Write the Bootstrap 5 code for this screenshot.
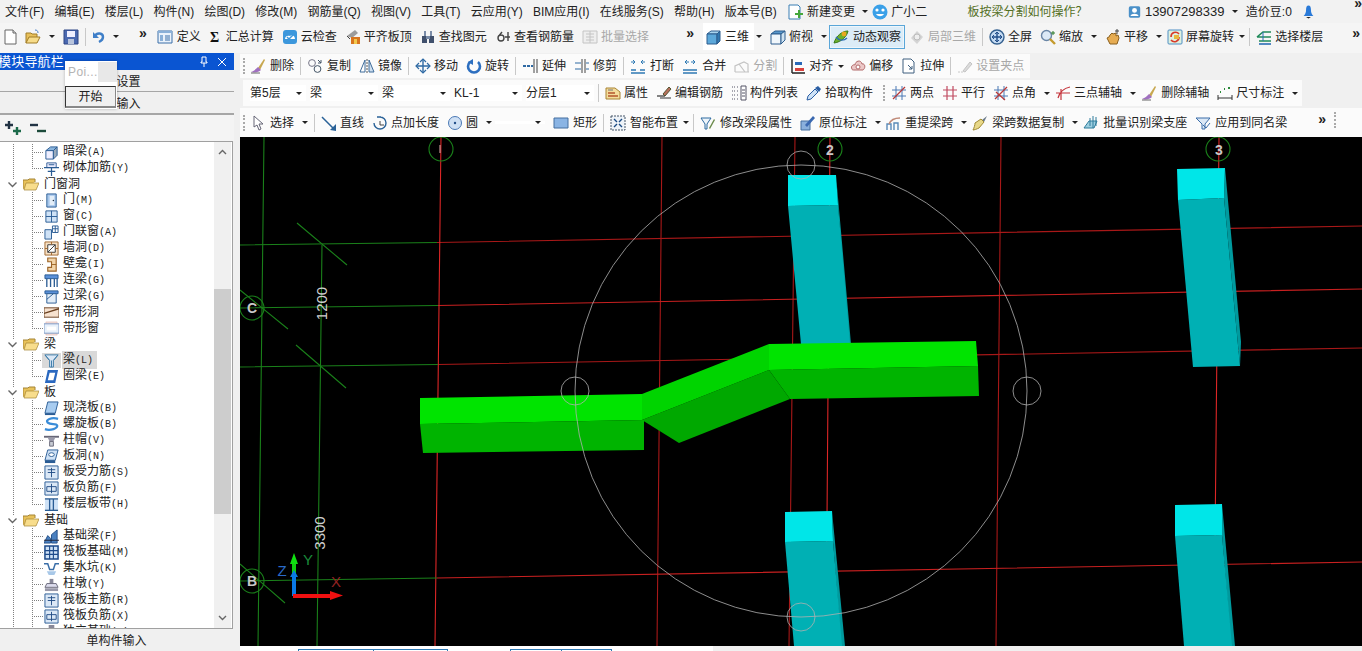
<!DOCTYPE html>
<html lang="zh-CN">
<head>
<meta charset="UTF-8">
<title>GCL</title>
<link href="https://cdn.jsdelivr.net/npm/bootstrap@5.3.0/dist/css/bootstrap.min.css" rel="stylesheet">
<script src="https://cdn.jsdelivr.net/npm/bootstrap@5.3.0/dist/js/bootstrap.bundle.min.js"></script>
<style>
html,body{height:100%}
body{width:1362px;height:651px;overflow:hidden;background:#f0f0f0;color:#222;font:12px/16px "Liberation Sans","Noto Sans CJK SC",sans-serif;white-space:nowrap;position:relative}
.ico{width:16px;height:16px;flex:none;display:block}
.ico-n{width:13px}
.ico-w{width:18px}
.tb-item{display:flex;align-items:center;gap:3px}
.tb-wide{gap:4px}
.tb-tight{gap:2px}
.tb-off{color:#a8a8a8}
.tb-sep{width:1px;height:18px;background:#c8c8c8;margin:0 -2px;flex:none}
.tb-sep-l{margin-left:-4px}
.tb-dd{width:0;height:0;border:3px solid transparent;border-top:3px solid #222;border-bottom:0;flex:none}
.tb-dd-t{margin:0 -2px 0 -3px}
.tb-dd-c{margin-right:-3px}
.tb-dd-n{margin-left:-6px}
.tb-dd-m{margin:0 -7px 0 -3px}
.tb-more{font:bold 14px/10px "Liberation Sans",sans-serif;color:#222;margin:-8px 2px 0 0;flex:none}
.tb-more-top{margin:-17px 0 0 29px}
.tb-more-gap{margin-left:12px}
.tb-grip{width:0;height:16px;border-left:2px dotted #aaa;flex:none}
.grip-l{margin-right:-3px}
.grip-m{margin:0 -2px 0 2px}

.menu-strip{height:23px;padding-left:5px;gap:10.2px;background:#f2f2f2}
.tool-strip{height:30px;background:#f5f5f5;padding:0 0 3px 4px;gap:8px}
.tool-left{width:692px;gap:8px;height:27px;flex:none}
.tool-white{background:#fff;height:27px;padding:0 5px 0 3px;margin-left:-1px}
.tool-active{border:1px solid #5aa6d8;background:#dcecf7;height:24px;padding:0 3px;gap:4px;margin:0 -4px 0 -6px;box-shadow:inset 0 0 0 1px #eef6fb}
.hint-q{color:#54701f;font-size:12px;margin-left:30px}
.phone-no{font-size:13px}

.side-pane{width:234px;flex:none;background:#f0f0f0;height:598px}
.pane-head{height:17px;background:#0a55d2;color:#fff;font-size:13px;line-height:16px;padding-right:3px;overflow:hidden}
.pane-title{margin-left:-2px;letter-spacing:.2px}
.pane-tab{height:22px;border-bottom:1px solid #a6a6a6;line-height:24px;text-align:center;padding-right:1px}
.pane-tab-b{height:23px;border-bottom:2px solid #a6a6a6}
.pane-tools{height:26px;gap:7px;padding-left:4px;background:#f4f4f4}
.tree-box{height:488px;background:#fff;border:1px solid #a0a0a0;border-left:0;width:233px;overflow:hidden}
.tree-rows{width:214px;padding:2px 0 0;margin:0;list-style:none;overflow:hidden;flex:none}
.tree-rows li{height:16px;display:flex;align-items:center;--dot:repeating-linear-gradient(#808080 0 1px,transparent 1px 2px);--dotx:repeating-linear-gradient(90deg,#808080 0 1px,transparent 1px 2px);background:var(--dot) 13px 0/1px 100% no-repeat}
.tree-leaf{padding-left:44px;gap:4px;background:var(--dot) 13px 0/1px 100% no-repeat,var(--dot) 32px 0/1px 100% no-repeat,var(--dotx) 32px 8px/12px 1px no-repeat!important}
.tree-end{background:var(--dot) 13px 0/1px 100% no-repeat,var(--dot) 32px 0/1px 8px no-repeat,var(--dotx) 32px 8px/12px 1px no-repeat!important}
.tree-leaf .ico{width:15px;height:15px}
.tree-sel{background:#d9d9d9;margin-left:-1px;padding:0 4px 0 1px}
.tree-leaf:has(.tree-sel) .ico{background:#d9d9d9;box-shadow:-2px 0 0 #d9d9d9,2px 0 0 #d9d9d9}
.tree-key{font:10px/16px "Liberation Mono",monospace}
.tree-fold{padding-left:7px;gap:5px}
.tree-fold .fold-chev{width:11px;height:11px;background:#fff;flex:none}
.scroll-rail{width:17px;background:#f0f0f0;flex:none;margin-left:auto;margin-right:1px}
.scroll-btn{height:20px;flex:none}
.scroll-gap{height:127px;flex:none}
.scroll-thumb{height:225px;background:#cdcdcd;flex:none}
.pane-foot{height:21px;line-height:23px;text-align:center;background:#f0f0f0;margin-top:1px;padding-right:1px}

.main-pane{width:1122px;flex:none;margin-left:6px;padding-top:1px}
.strip{background:#fbfbfb;gap:8px;flex:none}
.strip-a{height:24px;width:790px;padding-left:3px;margin-bottom:2px}
.strip-b{height:26px;width:1059px;margin-left:3px;padding-left:7px;margin-bottom:2px}
.strip-c{height:29px;width:1090px;padding-left:3px}
.strip-wrap{background:#fbfbfb}
.combo-wrap{gap:4px}
.combo-cell{width:68px;display:flex;align-items:center;justify-content:space-between;padding:0 4px 0 0;background:#fff}
.combo-first{width:56px}
.combo-blank{width:50px;margin-left:-5px}
.cad-view{width:1122px;height:509px;display:block;background:#000}
.foot-bar{height:5px;overflow:hidden}
.foot-white{width:473px;background:#fff;flex:none;padding-left:58px;gap:62px}
.foot-tab{border:1px solid #2b78b4;border-bottom:0;margin-top:3px;height:3px;display:flex}
.foot-tab span{border-right:1px solid #2b78b4}
.foot-t1{width:150px}.foot-t1 span{width:75px}
.foot-t2{width:102px}.foot-t2 span{width:51px}

.pop-start{position:absolute;left:65px;top:61px;width:52px;height:48px;background:#fff;box-shadow:0 0 3px rgba(0,0,0,.25)}
.pop-title{height:21px;color:#b4b4b4;font-size:12px;padding-left:3px;letter-spacing:.4px}
.pop-fade{width:20px;height:20px;background:#e8e8e8}
.pop-btn{display:block;width:51px;height:22px;margin:4px 0 0 0;padding:0;border:1px solid #333;border-right-color:#888;border-bottom:2px solid #888;border-radius:0;background:#f0f0f0;color:#222;font-size:12px;line-height:20px}
.cad-num{font:15px "Liberation Sans",sans-serif;fill:#d0d0d0;text-anchor:middle}
.cad-axis{font:14px "Liberation Sans",sans-serif;fill:#c8c8c8;font-weight:bold;text-anchor:middle}
.cad-tri{font:15px "Liberation Sans",sans-serif;text-anchor:middle}
</style>
</head>
<body class="d-flex flex-column">

<svg width="0" height="0" class="position-absolute">
<defs>
<symbol id="i-new" viewBox="0 0 13 16"><path d="M1 1h8l3 3v11H1z" fill="#fff" stroke="#666"/><path d="M9 1v3h3" fill="#ddd" stroke="#666"/></symbol>
<symbol id="i-open" viewBox="0 0 16 16"><path d="M1 14V4h5l1 1h5v3" fill="#e8c05a" stroke="#a07c28"/><path d="M1 14l3-6h11l-3 6z" fill="#f7dc8a" stroke="#a07c28"/><path d="M10 1c2 0 3 1 3 3" stroke="#4a80c8" fill="none"/></symbol>
<symbol id="i-save" viewBox="0 0 16 16"><path d="M1 1h14v14H1z" fill="#4a68b0" stroke="#2c4484"/><path d="M4 2h8v6H4z" fill="#eef"/><path d="M5 10h6v5H5z" fill="#b8c4dc"/></symbol>
<symbol id="i-undo" viewBox="0 0 13 16"><path d="M3 7c2-4 8-3 8 1 0 3-2 4-4 5" fill="none" stroke="#3f7fc8" stroke-width="2.4"/><path d="M1 3v6h6z" fill="#3f7fc8"/></symbol>
<symbol id="i-def" viewBox="0 0 16 16"><path d="M1 2h14v12H1z" fill="#eaf2fb" stroke="#3b6ea8"/><path d="M1 2h14v2H1zM3 6h3v6H3z" fill="#8ab0d8"/><path d="M8 7h5M8 9h5M8 11h5" stroke="#3b6ea8"/></symbol>
<symbol id="i-sum" viewBox="0 0 13 16"><text x="1" y="13" font-family="Liberation Serif" font-weight="bold" font-size="14" fill="#111">Σ</text></symbol>
<symbol id="i-cloud" viewBox="0 0 16 16"><rect x="1" y="1" width="14" height="14" rx="3" fill="#3c97dc"/><path d="M3 10c0-3 3-4 5-3 2-2 5 0 5 3z" fill="#fff"/><path d="M5 8l2 2 4-4" stroke="#3c97dc" fill="none" stroke-width="1.5"/></symbol>
<symbol id="i-flat" viewBox="0 0 16 16"><path d="M2 7l8-6 3 3-6 5z" fill="#9c9c9c"/><path d="M6 8h9v7H6z" fill="#d8751e"/><path d="M9 10h3v5H9z" fill="#f2c94c"/><path d="M2 7l3 3" stroke="#444"/></symbol>
<symbol id="i-find" viewBox="0 0 16 16"><path d="M2 7h5v7H2zM9 7h5v7H9z" fill="#40506c"/><path d="M4 2h2v5H4zM10 2h2v5h-2zM6 7h4v3H6z" fill="#7a8ca8"/></symbol>
<symbol id="i-rebar" viewBox="0 0 16 16"><path d="M6 6a3 3 0 1 0 0 6 3 3 0 0 0 0-6zM7 3L3 8" fill="none" stroke="#444" stroke-width="1.4"/><path d="M13 3v9M10 8h5" stroke="#444" stroke-width="1.4"/></symbol>
<symbol id="i-batch" viewBox="0 0 16 16"><path d="M1 2h14v12H1z" fill="#eee" stroke="#c4c4c4"/><path d="M4 5h8M4 8h8M4 11h8M8 2v12" stroke="#c4c4c4"/></symbol>
<symbol id="i-cube" viewBox="0 0 16 16"><path d="M1 5l4-3h9l-3 3z" fill="#a8d4ee" stroke="#2c5d8e"/><path d="M1 5h10v10H1z" fill="#5ca8da" stroke="#2c5d8e"/><path d="M11 5l3-3v10l-3 3z" fill="#3078b0" stroke="#2c5d8e"/></symbol>
<symbol id="i-top" viewBox="0 0 16 16"><path d="M1 5l4-3h10l-4 3z" fill="#5898cc" stroke="#2c5d8e"/><path d="M1 5h10v10H1z" fill="#f0f6fb" stroke="#2c5d8e"/><path d="M11 5l4-3v9l-4 4z" fill="#cfe3f2" stroke="#2c5d8e"/></symbol>
<symbol id="i-orbit" viewBox="0 0 16 16"><path d="M1 14C3 7 9 2 15 2c-1 5-6 11-14 12z" fill="#6eb02c" stroke="#3a7a18"/><circle cx="11" cy="5" r="2.4" fill="#e8a820"/><path d="M3 8c3 4 8 4 11 1" fill="none" stroke="#2e6fb4" stroke-width="1.4"/></symbol>
<symbol id="i-part" viewBox="0 0 16 16"><path d="M2 9l6-7 6 6-6 7z" fill="#d4d4d4"/><circle cx="8" cy="8" r="3" fill="#eee" stroke="#bbb"/></symbol>
<symbol id="i-full" viewBox="0 0 16 16"><circle cx="8" cy="8" r="7" fill="#c4daf2" stroke="#35608f" stroke-width="1.4"/><path d="M8 3v10M3 8h10" stroke="#234f8a" stroke-width="1.4"/><path d="M6 5l2-2 2 2M6 11l2 2 2-2M5 6L3 8l2 2M11 6l2 2-2 2" fill="none" stroke="#234f8a"/></symbol>
<symbol id="i-zoom" viewBox="0 0 16 16"><circle cx="6.5" cy="6.5" r="5" fill="#dce9f6" stroke="#6a86a6" stroke-width="1.4"/><path d="M10 10l5 5" stroke="#c49a2c" stroke-width="2.4"/><path d="M13 2v4M11 4h4" stroke="#2b7a2b"/></symbol>
<symbol id="i-pan" viewBox="0 0 16 16"><path d="M2 9l3 6h7l2-6-1-3-2 1V4L8 5 7 4 5 6 4 8z" fill="#e6ac52" stroke="#8a6020"/><path d="M12 0v5M10 2h4" stroke="#444"/></symbol>
<symbol id="i-spin" viewBox="0 0 16 16"><rect x="1" y="1" width="14" height="14" rx="1" fill="#dff0e0" stroke="#4f8fc4"/><path d="M4 8a4.5 4.5 0 0 1 8-3" fill="none" stroke="#d83a2a" stroke-width="1.6"/><path d="M12 8a4.5 4.5 0 0 1-8 3" fill="none" stroke="#d83a2a" stroke-width="1.6"/><path d="M7 6h5v4H7z" fill="#e8b83c"/></symbol>
<symbol id="i-floor" viewBox="0 0 16 16"><path d="M1 8l6-5h8M1 8h14M3 12h12" fill="none" stroke="#1f8a5a" stroke-width="1.6"/><path d="M3 15h12" stroke="#2b6cb4" stroke-width="1.6"/><path d="M7 3v9" stroke="#2b6cb4"/></symbol>
<symbol id="i-del" viewBox="0 0 16 16"><path d="M8 10l6-9 1 1-5 10z" fill="#c8a850"/><path d="M8 9l3 3c-2 2-6 3-10 2 3-1 5-3 7-5z" fill="#a070c0"/><path d="M1 15h9" stroke="#666"/></symbol>
<symbol id="i-copy" viewBox="0 0 16 16"><circle cx="5" cy="5" r="3.4" fill="none" stroke="#778"/><circle cx="10.5" cy="11" r="3.4" fill="none" stroke="#456"/><path d="M11 2l3 3M14 2v3h-3" stroke="#456" fill="none"/></symbol>
<symbol id="i-mirror" viewBox="0 0 16 16"><path d="M1 14L6 2v12z" fill="#fff" stroke="#3e6c9a"/><path d="M15 14L10 2v12z" fill="#cfe0f0" stroke="#3e6c9a"/><path d="M8 1v14" stroke="#555" stroke-dasharray="2 1"/></symbol>
<symbol id="i-move" viewBox="0 0 16 16"><path d="M8 1v14M1 8h14" stroke="#2f6aa4" stroke-width="1.4"/><path d="M5 4l3-3 3 3M5 12l3 3 3-3M4 5L1 8l3 3M12 5l3 3-3 3" fill="none" stroke="#2f6aa4" stroke-width="1.2"/></symbol>
<symbol id="i-rot" viewBox="0 0 16 16"><path d="M4 4a6 6 0 1 0 8 0" fill="none" stroke="#2d6fc0" stroke-width="2.6"/><path d="M7 1v6L2 4z" fill="#2d6fc0"/></symbol>
<symbol id="i-ext" viewBox="0 0 16 16"><path d="M12 1v14M15 1v14" stroke="#444"/><path d="M1 8h3M5 8h3M9 8h2" stroke="#2f6aa4" stroke-width="2"/></symbol>
<symbol id="i-trim" viewBox="0 0 16 16"><path d="M8 1v14M11 1v14" stroke="#444"/><path d="M1 5h6M1 11h6M12 5h3M12 11h3" stroke="#2f6aa4"/></symbol>
<symbol id="i-brk" viewBox="0 0 16 16"><path d="M1 12h5M10 12h5M1 15h14" stroke="#2f7ab4" stroke-width="1.4"/><path d="M3 2l2 2-2 2M13 2l-2 2 2 2" stroke="#2f7ab4" fill="none"/><path d="M1 4h3M15 4h-3" stroke="#2f7ab4"/></symbol>
<symbol id="i-join" viewBox="0 0 16 16"><path d="M1 12h14M1 15h14" stroke="#2f7ab4" stroke-width="1.4"/><path d="M5 2L3 4l2 2M11 2l2 2-2 2" stroke="#2f7ab4" fill="none"/><path d="M7 4H3M9 4h4" stroke="#2f7ab4"/></symbol>
<symbol id="i-split" viewBox="0 0 16 16"><path d="M1 14h14M1 14V8l9-4 4 2v8M5 6l6 8" fill="none" stroke="#c4c4c4" stroke-width="1.2"/></symbol>
<symbol id="i-align" viewBox="0 0 16 16"><path d="M2 1v14M2 15h13" stroke="#222" stroke-width="1.4"/><path d="M5 4h7v3H5z" fill="#2a68b8"/><path d="M5 10h9v3H5z" fill="#d8403c"/></symbol>
<symbol id="i-offs" viewBox="0 0 16 16"><path d="M2 11c-2-3 2-5 3-4 0-4 6-6 7-1 3-1 4 4 1 6H4c-1 0-2 0-2-1z" fill="#ecc8c8" stroke="#b26a6a"/><circle cx="8" cy="9" r="2" fill="#fff" stroke="#b26a6a"/></symbol>
<symbol id="i-str" viewBox="0 0 16 16"><path d="M2 1h8l3 3v11H2z" fill="#fff" stroke="#3f5f7f"/><path d="M7 7l4 4M11 8v3H8" fill="none" stroke="#3f5f7f"/></symbol>
<symbol id="i-grip" viewBox="0 0 16 16"><path d="M1 14h6" stroke="#c8c8c8" stroke-dasharray="2 1"/><path d="M6 13l7-9 2 2-7 8z" fill="#dcdcdc" stroke="#c4c4c4"/></symbol>
<symbol id="i-attr" viewBox="0 0 16 16"><path d="M1 3h9l5 4v7H1z" fill="#f4dc9c" stroke="#a88434"/><path d="M3 8h7M3 11h10" stroke="#b4552c" stroke-width="1.3"/><path d="M3 5h5" stroke="#777"/></symbol>
<symbol id="i-edit" viewBox="0 0 16 16"><path d="M1 11h8" stroke="#333" stroke-width="1.2"/><path d="M7 9l6-7 2 2-6 7z" fill="#b8705c" stroke="#553"/><path d="M4 13h11" stroke="#333"/></symbol>
<symbol id="i-list" viewBox="0 0 16 16"><path d="M10 1h5v14h-5z" fill="#fff" stroke="#556"/><path d="M11 5h3M11 8h3M11 11h3" stroke="#556"/><path d="M1 2h3M6 2h2M1 6h3M6 6h2M1 10h3M6 10h2M1 14h3M6 14h2" stroke="#556" stroke-dasharray="1 1"/></symbol>
<symbol id="i-pick" viewBox="0 0 16 16"><path d="M1 15l1-4 7-7 3 3-7 7z" fill="#cfe2f6" stroke="#2a5ea4"/><path d="M9 3l3-2 3 3-2 3z" fill="#2a5ea4"/></symbol>
<symbol id="i-2pt" viewBox="0 0 16 16"><path d="M5 1v14M11 1v14M1 5h14M1 11h14" stroke="#4a78b4"/><path d="M2 14L14 2" stroke="#b83a3a" stroke-width="1.2"/></symbol>
<symbol id="i-para" viewBox="0 0 16 16"><path d="M5 1v14M11 1v14M1 5h14M1 11h14" stroke="#c04a60" stroke-width="1.2"/></symbol>
<symbol id="i-ang" viewBox="0 0 16 16"><path d="M5 1v14M11 1v14M1 5h14M1 11h14" stroke="#4a78b4"/><path d="M2 14L14 2M3 7l9 8" stroke="#b83a3a" stroke-width="1.3"/></symbol>
<symbol id="i-3pt" viewBox="0 0 16 16"><path d="M6 15V4M1 8h14M3 13C5 6 10 3 15 2" fill="none" stroke="#c4333a" stroke-width="1.2"/></symbol>
<symbol id="i-dim" viewBox="0 0 16 16"><path d="M1 10v5M15 10v5M1 13h14" stroke="#333"/><path d="M3 7h1M7 4h1M11 3h3" stroke="#2b8a3a" stroke-width="2" stroke-dasharray="2 2"/></symbol>
<symbol id="i-sel" viewBox="0 0 16 16"><path d="M4 1v11l3-2 2 5 2-1-2-5h4z" fill="#fff" stroke="#667"/></symbol>
<symbol id="i-line" viewBox="0 0 16 16"><path d="M1 2l12 12" stroke="#2a6298" stroke-width="1.5"/><path d="M15 16V9l-6 6z" fill="#2a6298"/></symbol>
<symbol id="i-plen" viewBox="0 0 16 16"><path d="M5 2h4M2 8a6 6 0 1 0 6-6" fill="none" stroke="#2a6298" stroke-width="1.4"/><path d="M8 6v4h4" fill="none" stroke="#444"/></symbol>
<symbol id="i-circ" viewBox="0 0 16 16"><circle cx="8" cy="8" r="6.5" fill="#cfe0f4" stroke="#4a78b4"/><circle cx="8" cy="8" r="1.2" fill="#234f8a"/></symbol>
<symbol id="i-rect" viewBox="0 0 16 16"><path d="M1 3h14v10H1z" fill="#8ab4e4" stroke="#456f9f"/></symbol>
<symbol id="i-smart" viewBox="0 0 16 16"><path d="M1 1h14v14H1z" fill="#eef3f8" stroke="#456" stroke-dasharray="2 1"/><path d="M4 4l3 3M12 4L9 7M4 12l3-3M12 12L9 9" stroke="#1a4a84" stroke-width="1.4"/></symbol>
<symbol id="i-mod" viewBox="0 0 16 16"><path d="M1 3h10L7 9v5H5V9z" fill="#eef5fb" stroke="#2d6aa0"/><path d="M9 13l5-9 1 1-5 9z" fill="#6a8a4a"/></symbol>
<symbol id="i-orig" viewBox="0 0 16 16"><path d="M1 6h9v9H1z" fill="#8ab0dc" stroke="#456f9f"/><path d="M5 10l8-9 2 2-8 9z" fill="#3a68b0"/></symbol>
<symbol id="i-respan" viewBox="0 0 16 16"><path d="M1 15V9h4v6M8 15V8h4v7" fill="none" stroke="#5a8ab8" stroke-width="1.4"/><path d="M3 9c2-5 8-6 11-6" fill="none" stroke="#c08a78" stroke-width="1.4"/></symbol>
<symbol id="i-brush" viewBox="0 0 16 16"><path d="M10 5l5-4-3 6z" fill="#6a7a8a"/><path d="M3 8l6-4 3 3-5 6c-2 1-5 2-6 2 1-2 2-5 2-7z" fill="#e8d888" stroke="#a08a34"/></symbol>
<symbol id="i-bid" viewBox="0 0 16 16"><path d="M1 13l5-7h8l-3 7z" fill="#9ecfe0" stroke="#2f7c9c"/><path d="M10 1v12M13 2v9M7 3v8" stroke="#2f7c9c"/></symbol>
<symbol id="i-app" viewBox="0 0 16 16"><path d="M1 3h14l-5 6v5H7V9z" fill="#dbe8f6" stroke="#3a6ca8"/><path d="M8 10l3 3 4-5" fill="none" stroke="#3a6ca8"/></symbol>
<symbol id="i-change" viewBox="0 0 16 16"><path d="M2 1h9l2 2v12H2z" fill="#fff" stroke="#3a7fb4"/><path d="M8 9h3V6h2v3h3v2h-3v3h-2v-3H8z" fill="#45a83c"/></symbol>
<symbol id="i-face" viewBox="0 0 18 16"><circle cx="9" cy="8" r="7.5" fill="#3aa0e8"/><circle cx="6" cy="6" r="1.6" fill="#fff"/><circle cx="12" cy="6" r="1.6" fill="#fff"/><path d="M5 10c2 3 6 3 8 0z" fill="#fff"/></symbol>
<symbol id="i-user" viewBox="0 0 16 16"><rect x="1" y="1" width="14" height="14" rx="2" fill="#4a90c8"/><circle cx="8" cy="6" r="3" fill="#fff"/><path d="M3 13c1-4 9-4 10 0z" fill="#fff"/></symbol>
<symbol id="i-bell" viewBox="0 0 16 16"><path d="M8 0c2 0 3 2 3 5 0 4 1 6 3 8H2c2-2 3-4 3-8 0-3 1-5 3-5z" fill="#2a7ad8"/><path d="M5 14h6l-3 2z" fill="#222"/></symbol>
<symbol id="i-plus" viewBox="0 0 18 16"><path d="M1 5h8M5 1v8" stroke="#234" stroke-width="2.4"/><path d="M9 11h8M13 7v8" stroke="#1c6a4a" stroke-width="2.4"/></symbol>
<symbol id="i-minus" viewBox="0 0 18 16"><path d="M1 5h8" stroke="#234" stroke-width="2.4"/><path d="M8 11h9" stroke="#1c4a3a" stroke-width="2.4"/></symbol>
<symbol id="i-folder" viewBox="0 0 16 16"><path d="M0 13V4h5l1-1h6v3" fill="#e8c25a" stroke="#a58434"/><path d="M1 14l2-7h13l-3 7z" fill="#f8dd8c" stroke="#a58434" stroke-width=".7"/></symbol>
<symbol id="i-chev" viewBox="0 0 11 11"><path d="M1.5 3.5l4 4 4-4" fill="none" stroke="#666" stroke-width="1.4"/></symbol>
<symbol id="t-hid" viewBox="0 0 16 16"><path d="M2 6l5-4h7l-4 4z" fill="#8ab4dc" stroke="#2a5c94"/><path d="M2 6h8v9H2z" fill="#eef" stroke="#2a5c94"/><path d="M10 6l4-4v9l-4 4z" fill="#9ab" stroke="#2a5c94"/></symbol>
<symbol id="t-brk" viewBox="0 0 16 16"><path d="M3 2h10v5H3z" fill="#eef" stroke="#345e96"/><path d="M0 7h16M8 7v9M4 11h8M5 4h6" stroke="#2a5c94" stroke-width="1.3"/></symbol>
<symbol id="t-door" viewBox="0 0 16 16"><path d="M3 1h10v14H3z" fill="#a8c8ec" stroke="#2a5c94"/><path d="M6 3h5v10H6z" fill="#e4eef8"/><circle cx="10" cy="8" r=".8" fill="#234"/></symbol>
<symbol id="t-win" viewBox="0 0 16 16"><path d="M2 2h12v12H2z" fill="#cfe2f6" stroke="#2a5c94"/><path d="M8 2v12M2 8h12" stroke="#2a5c94"/></symbol>
<symbol id="t-dw" viewBox="0 0 16 16"><path d="M1 5h7v10H1z" fill="#cfe2f6" stroke="#2a5c94"/><path d="M9 1h6v7H9z" fill="#fff" stroke="#2a5c94"/><path d="M12 1v7M9 4h6" stroke="#2a5c94"/></symbol>
<symbol id="t-hole" viewBox="0 0 16 16"><path d="M1 1h14v14H1z" fill="#f6e0c4" stroke="#a06830"/><path d="M4 4h8v8H4z" fill="#fff" stroke="#333"/><path d="M4 12l8-8" stroke="#333"/><path d="M1 8h3M12 8h3M8 1v3M8 12v3" stroke="#a06830"/></symbol>
<symbol id="t-nich" viewBox="0 0 16 16"><path d="M4 1h9v14H4v-4h4V5H4z" fill="#f2d4a8" stroke="#9c6426" stroke-width="1.2"/><path d="M8 8h5" stroke="#9c6426"/></symbol>
<symbol id="t-conn" viewBox="0 0 16 16"><path d="M1 2h14v4H1z" fill="#5a90d8" stroke="#2a5c94"/><path d="M3 6v9M7 6v9M11 6v9M14 6v9" stroke="#2a5c94" stroke-width="1.4"/></symbol>
<symbol id="t-lint" viewBox="0 0 16 16"><path d="M1 2h14v3H1z" fill="#5a90d8" stroke="#2a5c94"/><path d="M3 5h10v10H3z" fill="#e4eef8" stroke="#2a5c94"/><path d="M3 11l7-6" stroke="#2a5c94"/></symbol>
<symbol id="t-sh" viewBox="0 0 16 16"><path d="M0 3h16v10H0z" fill="#f7e2cf" stroke="#6a4020"/><path d="M0 9l16-5" stroke="#6a4020" stroke-width="1.4"/></symbol>
<symbol id="t-sw" viewBox="0 0 16 16"><path d="M2 1h12v14H2z" fill="#f6e0d8" stroke="#dbb4b4" stroke-width=".6"/><path d="M0 3h16v10H0z" fill="#e8f1fb" stroke="#7a98c4"/><path d="M3 6h10v4H3z" fill="#fff"/></symbol>
<symbol id="t-beam" viewBox="0 0 16 16"><path d="M1 2h14L10 8v7H6V8z" fill="#dbe8f6" stroke="#3a7aa8"/><path d="M1 2l5 6M15 2l-5 6M8 8v7" stroke="#3a7aa8"/></symbol>
<symbol id="t-ring" viewBox="0 0 16 16"><path d="M4 1h11l-3 14H1z" fill="#2a68c0"/><path d="M6 4h6l-2 8H4z" fill="#fff"/></symbol>
<symbol id="t-slab" viewBox="0 0 16 16"><path d="M4 1h11l-3 12H1z" fill="#a8ccf0" stroke="#2a5c94"/><path d="M1 13h11v2H1z" fill="#2a5c94"/></symbol>
<symbol id="t-spir" viewBox="0 0 16 16"><path d="M15 2C8 0 1 3 4 6s9 0 10 3-7 6-13 4" fill="none" stroke="#3a8cd8" stroke-width="2.4"/></symbol>
<symbol id="t-cap" viewBox="0 0 16 16"><path d="M0 3h16v2H0z" fill="#667"/><path d="M4 5h8L10 9H6z" fill="#99a"/><path d="M6 9h4v5H6z" fill="#c8ccd4" stroke="#667"/></symbol>
<symbol id="t-shol" viewBox="0 0 16 16"><path d="M4 1h11l-3 11H1z" fill="#cfe2f6" stroke="#2a5c94"/><ellipse cx="8" cy="6" rx="3" ry="2" fill="#fff" stroke="#2a5c94"/><path d="M1 12h11v3H1z" fill="#2a5c94"/></symbol>
<symbol id="t-bar" viewBox="0 0 16 16"><path d="M1 1h14v14H1z" fill="#dbe8f6" stroke="#2a5c94"/><path d="M8 3v10M4 8h8M4 5h8" stroke="#234e86"/></symbol>
<symbol id="t-neg" viewBox="0 0 16 16"><path d="M1 1h14v14H1z" fill="#dbe8f6" stroke="#2a5c94"/><path d="M8 3v10M3 6h10v5H3z" fill="none" stroke="#234e86"/></symbol>
<symbol id="t-band" viewBox="0 0 16 16"><path d="M1 2h14M1 14h14" stroke="#2a5c94" stroke-width="1.6"/><path d="M1 3h14v10H1z" fill="#cfe2f6"/><path d="M6 2v12M10 2v12" stroke="#2a5c94" stroke-width="1.4"/></symbol>
<symbol id="t-fbm" viewBox="0 0 16 16"><path d="M0 15l4-8 3 3v5zM8 15V6l6-5v14z" fill="#4a80c0" stroke="#234e86"/><path d="M0 12h16" stroke="#223"/></symbol>
<symbol id="t-raft" viewBox="0 0 16 16"><path d="M1 1h14v14H1z" fill="#cfe2f6" stroke="#1d4a8a" stroke-width="1.6"/><path d="M6 1v14M10 1v14M1 6h14M1 10h14" stroke="#1d4a8a" stroke-width="1.2"/></symbol>
<symbol id="t-pit" viewBox="0 0 16 16"><path d="M0 3h4l2 6h4l2-6h4" fill="none" stroke="#3a6ea8" stroke-width="1.6"/><path d="M3 11h10l-2 4H5z" fill="#a8c8e8"/></symbol>
<symbol id="t-pier" viewBox="0 0 16 16"><path d="M6 2h4v5H6z" fill="#889"/><path d="M3 7h10l2 4H1z" fill="#dde" stroke="#667"/><path d="M1 12h14v3H1z" fill="#99a"/></symbol>
<symbol id="t-ind" viewBox="0 0 16 16"><path d="M5 0h6v6H5z" fill="#889"/><path d="M1 8h14v6H1z" fill="#dde" stroke="#667"/></symbol>
</defs>
</svg>

<!-- menu -->
<div class="menu-strip d-flex align-items-center flex-none">
  <span>文件(F)</span><span>编辑(E)</span><span>楼层(L)</span><span>构件(N)</span><span>绘图(D)</span><span>修改(M)</span><span>钢筋量(Q)</span><span>视图(V)</span><span>工具(T)</span><span>云应用(Y)</span><span>BIM应用(I)</span><span>在线服务(S)</span><span>帮助(H)</span><span>版本号(B)</span>
  <span class="tb-item tb-wide"><svg class="ico"><use href="#i-change"/></svg>新建变更</span><i class="tb-dd tb-dd-m"></i>
  <span class="tb-item tb-tight"><svg class="ico ico-w"><use href="#i-face"/></svg>广小二</span>
  <span class="hint-q">板按梁分割如何操作？</span>
  <span class="tb-item tb-wide ms-auto"><svg class="ico ico-n"><use href="#i-user"/></svg><span class="phone-no">13907298339</span></span><i class="tb-dd tb-dd-t"></i>
  <span>造价豆:0</span>
  <svg class="ico ico-n"><use href="#i-bell"/></svg>
  <span class="tb-more tb-more-top">»</span>
</div>

<!-- main toolbar -->
<div class="tool-strip d-flex align-items-center">
  <div class="tool-left d-flex align-items-center">
    <svg class="ico ico-n"><use href="#i-new"/></svg>
    <svg class="ico"><use href="#i-open"/></svg><i class="tb-dd"></i>
    <svg class="ico"><use href="#i-save"/></svg><i class="tb-sep"></i>
    <svg class="ico ico-n"><use href="#i-undo"/></svg><i class="tb-dd"></i>
    <span class="tb-more tb-more-gap">»</span>
    <span class="tb-item tb-wide"><svg class="ico"><use href="#i-def"/></svg>定义</span>
    <span class="tb-item tb-wide"><svg class="ico ico-n"><use href="#i-sum"/></svg>汇总计算</span>
    <span class="tb-item"><svg class="ico"><use href="#i-cloud"/></svg>云检查</span>
    <span class="tb-item"><svg class="ico"><use href="#i-flat"/></svg>平齐板顶</span>
    <span class="tb-item"><svg class="ico"><use href="#i-find"/></svg>查找图元</span>
    <span class="tb-item"><svg class="ico"><use href="#i-rebar"/></svg>查看钢筋量</span>
    <span class="tb-item tb-off"><svg class="ico"><use href="#i-batch"/></svg>批量选择</span>
    <span class="tb-more ms-auto">»</span>
  </div>
  <div class="tool-white d-flex align-items-center">
    <span class="tb-item"><svg class="ico"><use href="#i-cube"/></svg>三维</span>
  </div>
  <i class="tb-dd tb-dd-n"></i>
  <span class="tb-item"><svg class="ico"><use href="#i-top"/></svg>俯视</span><i class="tb-dd"></i>
  <span class="tb-item tool-active"><svg class="ico"><use href="#i-orbit"/></svg>动态观察</span>
  <span class="tb-item tb-off"><svg class="ico"><use href="#i-part"/></svg>局部三维</span><i class="tb-sep"></i>
  <span class="tb-item"><svg class="ico"><use href="#i-full"/></svg>全屏</span>
  <span class="tb-item"><svg class="ico"><use href="#i-zoom"/></svg>缩放</span><i class="tb-dd"></i>
  <span class="tb-item"><svg class="ico"><use href="#i-pan"/></svg>平移</span><i class="tb-dd tb-dd-c"></i>
  <span class="tb-item"><svg class="ico"><use href="#i-spin"/></svg>屏幕旋转</span><i class="tb-dd tb-dd-t"></i><i class="tb-sep"></i>
  <span class="tb-item"><svg class="ico"><use href="#i-floor"/></svg>选择楼层</span>
  <span class="tb-more ms-auto">»</span>
</div>

<div class="d-flex">
  <!-- left pane -->
  <aside class="side-pane d-flex flex-column">
    <div class="pane-head d-flex align-items-center">
      <span class="pane-title">模块导航栏</span>
      <svg width="10" height="12" viewBox="0 0 10 12" class="ms-auto"><path d="M3 1h4v5h1v1H2V6h1zM5 7v4" fill="none" stroke="#fff"/></svg>
      <svg width="10" height="10" viewBox="0 0 10 10" class="ms-2 me-1"><path d="M1 1l8 8M9 1l-8 8" stroke="#fff"/></svg>
    </div>
    <div class="pane-tab">工程设置</div>
    <div class="pane-tab pane-tab-b">绘图输入</div>
    <div class="pane-tools d-flex align-items-center">
      <svg class="ico ico-w"><use href="#i-plus"/></svg>
      <svg class="ico ico-w"><use href="#i-minus"/></svg>
    </div>
    <div class="tree-box d-flex">
      <ul class="tree-rows">
        <li class="tree-leaf"><svg class="ico"><use href="#t-hid"/></svg><span>暗梁<span class="tree-key">(A)</span></span></li>
        <li class="tree-leaf tree-end"><svg class="ico"><use href="#t-brk"/></svg><span>砌体加筋<span class="tree-key">(Y)</span></span></li>
        <li class="tree-fold"><svg class="fold-chev"><use href="#i-chev"/></svg><svg class="ico"><use href="#i-folder"/></svg><span>门窗洞</span></li>
        <li class="tree-leaf"><svg class="ico"><use href="#t-door"/></svg><span>门<span class="tree-key">(M)</span></span></li>
        <li class="tree-leaf"><svg class="ico"><use href="#t-win"/></svg><span>窗<span class="tree-key">(C)</span></span></li>
        <li class="tree-leaf"><svg class="ico"><use href="#t-dw"/></svg><span>门联窗<span class="tree-key">(A)</span></span></li>
        <li class="tree-leaf"><svg class="ico"><use href="#t-hole"/></svg><span>墙洞<span class="tree-key">(D)</span></span></li>
        <li class="tree-leaf"><svg class="ico"><use href="#t-nich"/></svg><span>壁龛<span class="tree-key">(I)</span></span></li>
        <li class="tree-leaf"><svg class="ico"><use href="#t-conn"/></svg><span>连梁<span class="tree-key">(G)</span></span></li>
        <li class="tree-leaf"><svg class="ico"><use href="#t-lint"/></svg><span>过梁<span class="tree-key">(G)</span></span></li>
        <li class="tree-leaf"><svg class="ico"><use href="#t-sh"/></svg><span>带形洞</span></li>
        <li class="tree-leaf tree-end"><svg class="ico"><use href="#t-sw"/></svg><span>带形窗</span></li>
        <li class="tree-fold"><svg class="fold-chev"><use href="#i-chev"/></svg><svg class="ico"><use href="#i-folder"/></svg><span>梁</span></li>
        <li class="tree-leaf"><svg class="ico"><use href="#t-beam"/></svg><span class="tree-sel">梁<span class="tree-key">(L)</span></span></li>
        <li class="tree-leaf tree-end"><svg class="ico"><use href="#t-ring"/></svg><span>圈梁<span class="tree-key">(E)</span></span></li>
        <li class="tree-fold"><svg class="fold-chev"><use href="#i-chev"/></svg><svg class="ico"><use href="#i-folder"/></svg><span>板</span></li>
        <li class="tree-leaf"><svg class="ico"><use href="#t-slab"/></svg><span>现浇板<span class="tree-key">(B)</span></span></li>
        <li class="tree-leaf"><svg class="ico"><use href="#t-spir"/></svg><span>螺旋板<span class="tree-key">(B)</span></span></li>
        <li class="tree-leaf"><svg class="ico"><use href="#t-cap"/></svg><span>柱帽<span class="tree-key">(V)</span></span></li>
        <li class="tree-leaf"><svg class="ico"><use href="#t-shol"/></svg><span>板洞<span class="tree-key">(N)</span></span></li>
        <li class="tree-leaf"><svg class="ico"><use href="#t-bar"/></svg><span>板受力筋<span class="tree-key">(S)</span></span></li>
        <li class="tree-leaf"><svg class="ico"><use href="#t-neg"/></svg><span>板负筋<span class="tree-key">(F)</span></span></li>
        <li class="tree-leaf tree-end"><svg class="ico"><use href="#t-band"/></svg><span>楼层板带<span class="tree-key">(H)</span></span></li>
        <li class="tree-fold"><svg class="fold-chev"><use href="#i-chev"/></svg><svg class="ico"><use href="#i-folder"/></svg><span>基础</span></li>
        <li class="tree-leaf"><svg class="ico"><use href="#t-fbm"/></svg><span>基础梁<span class="tree-key">(F)</span></span></li>
        <li class="tree-leaf"><svg class="ico"><use href="#t-raft"/></svg><span>筏板基础<span class="tree-key">(M)</span></span></li>
        <li class="tree-leaf"><svg class="ico"><use href="#t-pit"/></svg><span>集水坑<span class="tree-key">(K)</span></span></li>
        <li class="tree-leaf"><svg class="ico"><use href="#t-pier"/></svg><span>柱墩<span class="tree-key">(Y)</span></span></li>
        <li class="tree-leaf"><svg class="ico"><use href="#t-bar"/></svg><span>筏板主筋<span class="tree-key">(R)</span></span></li>
        <li class="tree-leaf"><svg class="ico"><use href="#t-neg"/></svg><span>筏板负筋<span class="tree-key">(X)</span></span></li>
        <li class="tree-leaf"><svg class="ico"><use href="#t-ind"/></svg><span>独立基础<span class="tree-key">(D)</span></span></li>
      </ul>
      <div class="scroll-rail d-flex flex-column">
        <div class="scroll-btn d-flex align-items-center justify-content-center"><svg width="9" height="6" viewBox="0 0 9 6"><path d="M1 5l3.5-3.5L8 5" fill="none" stroke="#666" stroke-width="1.4"/></svg></div>
        <div class="scroll-gap"></div>
        <div class="scroll-thumb"></div>
        <div class="scroll-btn d-flex align-items-center justify-content-center mt-auto"><svg width="9" height="6" viewBox="0 0 9 6"><path d="M1 1l3.5 3.5L8 1" fill="none" stroke="#666" stroke-width="1.4"/></svg></div>
      </div>
    </div>
    <div class="pane-foot">单构件输入</div>
  </aside>

  <!-- drawing area -->
  <main class="main-pane">
    <div class="strip strip-a d-flex align-items-center">
      <i class="tb-grip grip-l"></i>
      <span class="tb-item tb-wide"><svg class="ico"><use href="#i-del"/></svg>删除</span><i class="tb-sep"></i>
      <span class="tb-item tb-wide"><svg class="ico"><use href="#i-copy"/></svg>复制</span>
      <span class="tb-item"><svg class="ico"><use href="#i-mirror"/></svg>镜像</span><i class="tb-sep"></i>
      <span class="tb-item"><svg class="ico"><use href="#i-move"/></svg>移动</span>
      <span class="tb-item"><svg class="ico"><use href="#i-rot"/></svg>旋转</span><i class="tb-sep"></i>
      <span class="tb-item tb-wide"><svg class="ico"><use href="#i-ext"/></svg>延伸</span>
      <span class="tb-item"><svg class="ico"><use href="#i-trim"/></svg>修剪</span><i class="tb-sep"></i>
      <span class="tb-item tb-wide"><svg class="ico"><use href="#i-brk"/></svg>打断</span>
      <span class="tb-item tb-wide"><svg class="ico"><use href="#i-join"/></svg>合并</span>
      <span class="tb-item tb-off"><svg class="ico"><use href="#i-split"/></svg>分割</span><i class="tb-sep"></i>
      <span class="tb-item"><svg class="ico"><use href="#i-align"/></svg>对齐</span><i class="tb-dd tb-dd-t"></i>
      <span class="tb-item"><svg class="ico"><use href="#i-offs"/></svg>偏移</span>
      <span class="tb-item"><svg class="ico"><use href="#i-str"/></svg>拉伸</span><i class="tb-sep"></i>
      <span class="tb-item tb-off"><svg class="ico"><use href="#i-grip"/></svg>设置夹点</span>
    </div>
    <div class="strip strip-b d-flex align-items-center">
      <div class="combo-wrap d-flex">
        <span class="combo-cell combo-first"><span>第5层</span><i class="tb-dd"></i></span>
        <span class="combo-cell"><span>梁</span><i class="tb-dd"></i></span>
        <span class="combo-cell"><span>梁</span><i class="tb-dd"></i></span>
        <span class="combo-cell"><span>KL-1</span><i class="tb-dd"></i></span>
        <span class="combo-cell"><span>分层1</span><i class="tb-dd"></i></span>
      </div>
      <i class="tb-sep tb-sep-l"></i>
      <span class="tb-item"><svg class="ico"><use href="#i-attr"/></svg>属性</span>
      <span class="tb-item"><svg class="ico"><use href="#i-edit"/></svg>编辑钢筋</span>
      <span class="tb-item"><svg class="ico"><use href="#i-list"/></svg>构件列表</span>
      <span class="tb-item"><svg class="ico"><use href="#i-pick"/></svg>拾取构件</span>
      <i class="tb-grip grip-m"></i>
      <span class="tb-item"><svg class="ico"><use href="#i-2pt"/></svg>两点</span>
      <span class="tb-item"><svg class="ico"><use href="#i-para"/></svg>平行</span>
      <span class="tb-item"><svg class="ico"><use href="#i-ang"/></svg>点角</span><i class="tb-dd tb-dd-c"></i>
      <span class="tb-item"><svg class="ico"><use href="#i-3pt"/></svg>三点辅轴</span><i class="tb-dd tb-dd-c"></i>
      <span class="tb-item tb-wide"><svg class="ico"><use href="#i-del"/></svg>删除辅轴</span>
      <span class="tb-item"><svg class="ico"><use href="#i-dim"/></svg>尺寸标注</span><i class="tb-dd"></i>
    </div>
    <div class="d-flex strip-wrap">
      <div class="strip strip-c d-flex align-items-center">
        <i class="tb-grip grip-l"></i>
        <span class="tb-item tb-wide"><svg class="ico"><use href="#i-sel"/></svg>选择</span><i class="tb-dd"></i><i class="tb-sep"></i>
        <span class="tb-item"><svg class="ico"><use href="#i-line"/></svg>直线</span>
        <span class="tb-item"><svg class="ico"><use href="#i-plen"/></svg>点加长度</span>
        <span class="tb-item"><svg class="ico"><use href="#i-circ"/></svg>圆</span><i class="tb-dd"></i>
        <span class="combo-cell combo-blank"><span></span><i class="tb-dd"></i></span>
        <span class="tb-item tb-wide"><svg class="ico"><use href="#i-rect"/></svg>矩形</span><i class="tb-sep"></i>
        <span class="tb-item tb-wide"><svg class="ico"><use href="#i-smart"/></svg>智能布置</span><i class="tb-dd tb-dd-t"></i><i class="tb-sep"></i>
        <span class="tb-item tb-wide"><svg class="ico"><use href="#i-mod"/></svg>修改梁段属性</span>
        <span class="tb-item"><svg class="ico"><use href="#i-orig"/></svg>原位标注</span><i class="tb-dd tb-dd-c"></i>
        <span class="tb-item"><svg class="ico"><use href="#i-respan"/></svg>重提梁跨</span><i class="tb-dd tb-dd-c"></i>
        <span class="tb-item tb-wide"><svg class="ico"><use href="#i-brush"/></svg>梁跨数据复制</span><i class="tb-dd tb-dd-c"></i>
        <span class="tb-item tb-wide"><svg class="ico"><use href="#i-bid"/></svg>批量识别梁支座</span>
        <span class="tb-item tb-wide"><svg class="ico"><use href="#i-app"/></svg>应用到同名梁</span>
        <span class="tb-more ms-auto me-1">»</span>
      </div>
      <i class="tb-grip ms-1 mt-1"></i>
    </div>

    <svg class="cad-view" viewBox="240 137 1122 509" xmlns="http://www.w3.org/2000/svg">
      <g fill="none" stroke="#a81818" stroke-width="1.1">
        <path d="M437 242.5L1362 226M438 364.5L1362 348"/>
        <path d="M662 137L657 646M795 137L789 646M1001 137L996 646"/>
        <path stroke="#c82020" d="M438 305.5L1362 289M437 578L1362 562"/>
        <path stroke="#dc2626" d="M441 137L435 646M830 137L826 646M1219 137L1214 646"/>
      </g>
      <g fill="none" stroke="#1a801a" stroke-width="1.1">
        <path d="M264 137L258 646M322 245L317 646"/>
        <path d="M240 245L437 242.5M240 308L438 305.5M240 367L438 364.5M240 581L437 578"/>
        <path d="M297 223L347 265M296 345L346 388M240 290L288 329M240 564L285 603"/>
        <circle cx="441" cy="149" r="12"/><circle cx="830" cy="149" r="12"/><circle cx="1218" cy="149" r="12"/>
        <circle cx="252" cy="308" r="12"/><circle cx="252" cy="581" r="12"/>
      </g>
      <text class="cad-num" transform="translate(327,303.5) rotate(-90)">1200</text>
      <text class="cad-num" transform="translate(325,533) rotate(-90)">3300</text>
      <text class="cad-axis" x="252" y="313">C</text>
      <text class="cad-axis" x="252" y="586">B</text>
      <text class="cad-axis" x="830" y="155">2</text>
      <text class="cad-axis" x="1219" y="155">3</text>
      <path d="M440 145v8" stroke="#e8b0b0"/>

      <!-- columns -->
      <path d="M836 175L851 344H847L838 205z" fill="#009a9e"/>
      <path d="M788 206L838 205L850 344H801z" fill="#00b0b4"/>
      <path d="M788 175H836L838 205L788 206z" fill="#00e6e8"/>
      <path d="M1225 168L1241 342L1240 366L1224 198z" fill="#009a9e"/>
      <path d="M1178 200L1224 198L1240 366L1193 367z" fill="#00b0b4"/>
      <path d="M1177 169L1225 168L1224 198L1178 200z" fill="#00e6e8"/>
      <path d="M832 511L845 646H841L833 541z" fill="#009a9e"/>
      <path d="M785 542L833 541L842 646H794z" fill="#00b0b4"/>
      <path d="M785 512L832 511L833 541L785 542z" fill="#00e6e8"/>
      <path d="M1222 504L1235 646H1231L1222 535z" fill="#009a9e"/>
      <path d="M1175 536L1222 535L1232 646H1184z" fill="#00b0b4"/>
      <path d="M1175 505L1222 504L1222 535L1175 536z" fill="#00e6e8"/>

      <!-- beam -->
      <path d="M642 420L769 370L790 399L679 443z" fill="#00a800"/>
      <path d="M642 394L769 344V370L642 420z" fill="#00d400"/>
      <path d="M769 370L978 366L979 396L790 399z" fill="#00b400"/>
      <path d="M769 344L976 341L978 366L769 370z" fill="#00e400"/>
      <path d="M420 424L644 420V450L423 453z" fill="#00b400"/>
      <path d="M420 398L642 394V420L420 424z" fill="#00e400"/>

      <!-- selection circle -->
      <g fill="none" stroke="#b0b0b0" stroke-width=".8">
        <circle cx="801" cy="391" r="226"/>
        <circle cx="575" cy="391" r="14"/><circle cx="1027" cy="391" r="14"/>
        <circle cx="801" cy="165" r="14"/><circle cx="801" cy="617" r="14"/>
      </g>

      <!-- axes -->
      <path d="M294 596V575" stroke="#0a7ae6" stroke-width="4"/>
      <path d="M294 575V563" stroke="#10d010" stroke-width="4"/>
      <path d="M294 553L298 564H290z" fill="#10e010"/>
      <path d="M294 570L298 577H290z" fill="#0a7ae6"/>
      <path d="M293 596H332" stroke="#f01010" stroke-width="4"/>
      <path d="M343 595.5L330 591V600z" fill="#f01010"/>
      <text class="cad-tri" x="282" y="576" fill="#2a6ac8">Z</text>
      <text class="cad-tri" x="308" y="565" fill="#1a8a3a">Y</text>
      <text class="cad-tri" x="336" y="587" fill="#902020">X</text>
    </svg>
    <div class="foot-bar d-flex">
      <div class="foot-white d-flex">
        <div class="foot-tab foot-t1"><span></span></div>
        <div class="foot-tab foot-t2"><span></span></div>
      </div>
    </div>
  </main>
</div>

<!-- start tip over the pane -->
<div class="pop-start">
  <div class="pop-title d-flex align-items-center justify-content-between"><span>Poi...</span><span class="pop-fade"></span></div>
  <button type="button" class="btn pop-btn">开始</button>
</div>

</body>
</html>
